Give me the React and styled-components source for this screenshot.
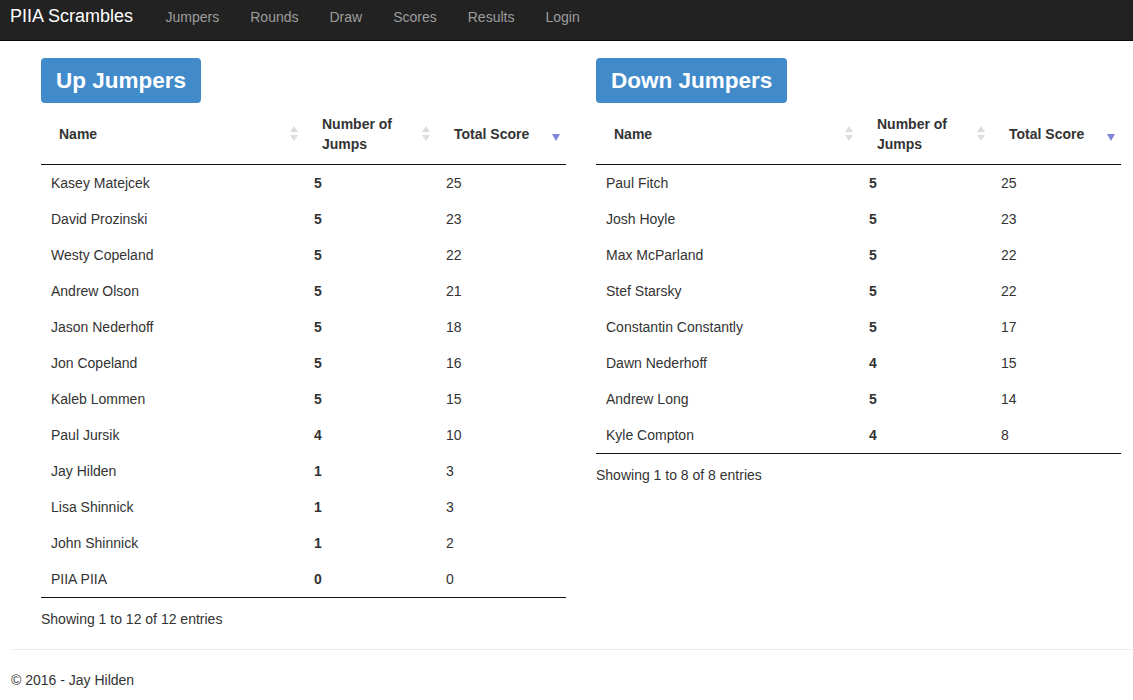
import React from 'react'
import styled, { createGlobalStyle } from 'styled-components'

const GlobalStyle = createGlobalStyle`
  html, body {
    margin: 0;
    padding: 0;
    background: #fff;
  }
  body {
    font-family: "Liberation Sans", Arial, sans-serif;
    font-size: 14px;
    line-height: 20px;
    color: #333;
  }
`

const Navbar = styled.nav`
  display: flex;
  align-items: flex-start;
  height: 40px;
  background: #222;
  border-bottom: 1px solid #080808;
  padding-left: 10px;
`

const Brand = styled.a`
  font-size: 18px;
  line-height: 20px;
  padding: 6px 17px 0 0;
  color: #fff;
  text-decoration: none;
`

const NavLink = styled.a`
  font-size: 14px;
  line-height: 20px;
  padding: 7px 15.5px 0;
  color: #9d9d9d;
  text-decoration: none;
`

const Main = styled.main`
  display: grid;
  grid-template-columns: 525px 525px;
  column-gap: 30px;
  align-items: start;
  padding: 17px 0 0 41px;
`

const Panel = styled.section`
  display: flex;
  flex-direction: column;
  align-items: flex-start;
  min-width: 0;
`

const Heading = styled.h2`
  margin: 0 0 1px;
  padding: 8px 15px;
  background: #428bca;
  color: #fff;
  font-size: 22.5px;
  line-height: 29px;
  font-weight: bold;
  border-radius: 4px;
`

const Table = styled.table`
  width: 525px;
  border-collapse: collapse;
  border-spacing: 0;
  table-layout: fixed;
  border-bottom: 1px solid #111;
`

const Th = styled.th`
  position: relative;
  box-sizing: border-box;
  width: ${p => p.$w}px;
  padding: 10px 18px;
  text-align: left;
  vertical-align: middle;
  font-weight: bold;
  line-height: 20px;
  border-bottom: 1px solid #111;
`

const SortIcon = styled.svg`
  position: absolute;
  right: 6px;
  top: 50%;
  margin-top: ${p => p.$shift || -8}px;
`

const Td = styled.td`
  padding: 8px 10px;
  line-height: 20px;
  font-weight: ${p => (p.$bold ? 'bold' : 'normal')};
`

const Info = styled.div`
  padding-top: 11px;
  line-height: 20px;
`

const Footer = styled.footer`
  margin-top: 20px;
  padding: 0 0 0 11px;
`

const Rule = styled.hr`
  margin: 0 0 20px;
  border: 0;
  border-top: 1px solid #eee;
`

const Copy = styled.p`
  margin: 0;
`

function BothArrows() {
  return (
    <SortIcon width="8" height="16" viewBox="0 0 8 16">
      <polygon points="4,0 8,6 0,6" fill="#ddd" />
      <polygon points="0,9 8,9 4,15" fill="#ddd" />
    </SortIcon>
  )
}

function DescArrow() {
  return (
    <SortIcon width="8" height="16" viewBox="0 0 8 16" $shift={-4}>
      <polygon points="0,4 8,4 4,11" fill="#7f84dd" />
    </SortIcon>
  )
}

const up = [
  ['Kasey Matejcek', 5, 25],
  ['David Prozinski', 5, 23],
  ['Westy Copeland', 5, 22],
  ['Andrew Olson', 5, 21],
  ['Jason Nederhoff', 5, 18],
  ['Jon Copeland', 5, 16],
  ['Kaleb Lommen', 5, 15],
  ['Paul Jursik', 4, 10],
  ['Jay Hilden', 1, 3],
  ['Lisa Shinnick', 1, 3],
  ['John Shinnick', 1, 2],
  ['PIIA PIIA', 0, 0],
]

const down = [
  ['Paul Fitch', 5, 25],
  ['Josh Hoyle', 5, 23],
  ['Max McParland', 5, 22],
  ['Stef Starsky', 5, 22],
  ['Constantin Constantly', 5, 17],
  ['Dawn Nederhoff', 4, 15],
  ['Andrew Long', 5, 14],
  ['Kyle Compton', 4, 8],
]

function JumperTable({ title, rows }) {
  return (
    <Panel>
      <Heading>{title}</Heading>
      <Table>
        <thead>
          <tr>
            <Th $w={263}>Name<BothArrows /></Th>
            <Th $w={132}>Number of Jumps<BothArrows /></Th>
            <Th $w={130}>Total Score<DescArrow /></Th>
          </tr>
        </thead>
        <tbody>
          {rows.map(([name, jumps, score]) => (
            <tr key={name}>
              <Td>{name}</Td>
              <Td $bold>{jumps}</Td>
              <Td>{score}</Td>
            </tr>
          ))}
        </tbody>
      </Table>
      <Info>Showing 1 to {rows.length} of {rows.length} entries</Info>
    </Panel>
  )
}

export default function App() {
  return (
    <>
      <GlobalStyle />
      <Navbar>
        <Brand href="#">PIIA Scrambles</Brand>
        <NavLink href="#">Jumpers</NavLink>
        <NavLink href="#">Rounds</NavLink>
        <NavLink href="#">Draw</NavLink>
        <NavLink href="#">Scores</NavLink>
        <NavLink href="#">Results</NavLink>
        <NavLink href="#">Login</NavLink>
      </Navbar>
      <Main>
        <JumperTable title="Up Jumpers" rows={up} />
        <JumperTable title="Down Jumpers" rows={down} />
      </Main>
      <Footer>
        <Rule />
        <Copy>© 2016 - Jay Hilden</Copy>
      </Footer>
    </>
  )
}
